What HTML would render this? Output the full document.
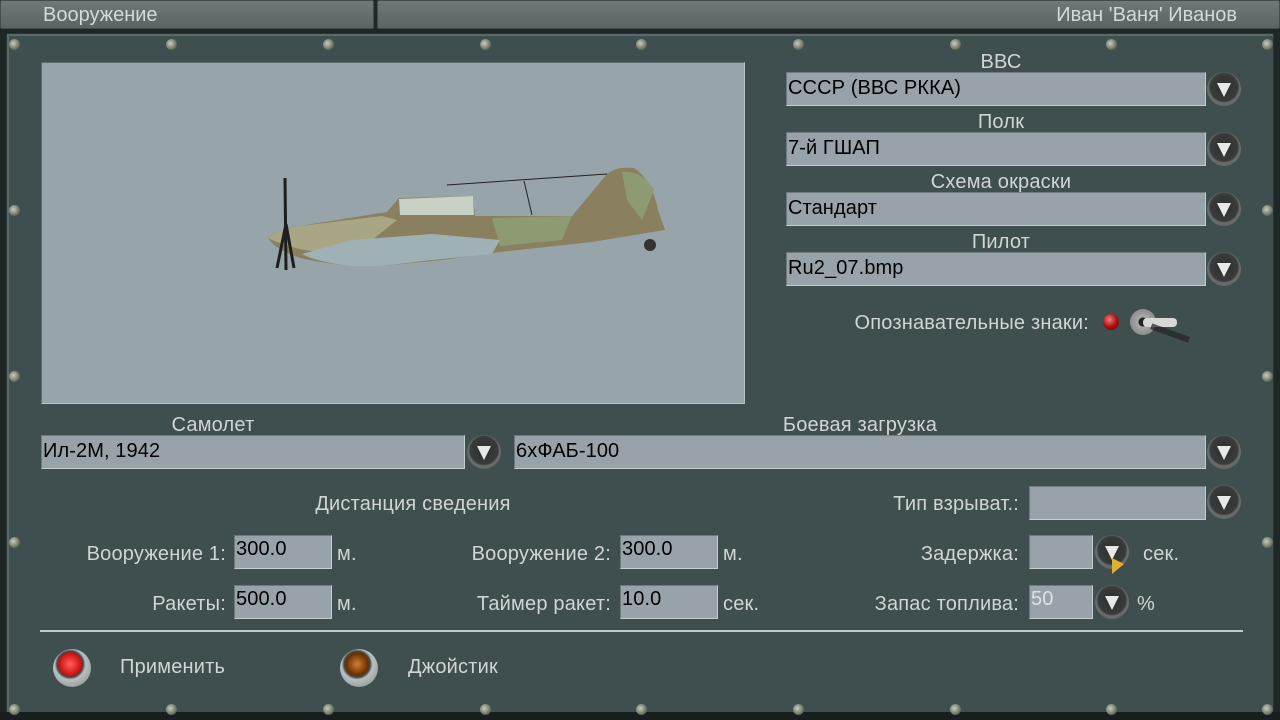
<!DOCTYPE html>
<html><head><meta charset="utf-8"><style>
*{margin:0;padding:0;box-sizing:border-box}
body{width:1280px;height:720px;overflow:hidden;background:#1f2626;font-family:"Liberation Sans",sans-serif;position:relative}
.a{position:absolute}
.top{top:0;height:29px;background:linear-gradient(#6f7876,#5b6463);border:1px solid #444c4b;border-radius:2px;color:#d4d8d8;font-size:20px;line-height:28px}
.panel{left:6px;top:33px;width:1268px;height:680px;background:#3f4e4e;border:1px solid #2a3333;box-shadow:inset 2px 2px 0 #5a6a6a}
.f{background:#97a3a8;border:1px solid #6e7a7c;border-bottom-color:#c4cccc;border-right-color:#c4cccc;color:#000;font-size:20px;line-height:31px;padding-left:1px;letter-spacing:.1px}
.l{color:#d0d5d5;font-size:20px;line-height:21px;white-space:nowrap;letter-spacing:.2px}
.c{text-align:center}
.r{text-align:right}
.b{width:34px;height:34px;border-radius:50%;background:radial-gradient(circle at 50% 45%,#2c2e2e 0,#3a3c3c 55%,#6a6e6e 62%,#4c5050 100%);}
.b:after{content:"";position:absolute;left:10px;top:11px;border-left:7px solid transparent;border-right:7px solid transparent;border-top:14px solid #e8e8e8}
.s{width:11px;height:11px;border-radius:50%;background:radial-gradient(circle at 40% 40%,#c8ccc0,#6f7666 60%,#2c302a);}
</style></head><body>
<div class="a top" style="left:0;width:374px;padding-left:42px">Вооружение</div>
<div class="a top" style="left:377px;width:903px;text-align:right;padding-right:42px">Иван 'Ваня' Иванов</div>
<div class="a panel"></div>
<div class="a" style="left:0;top:712px;width:1280px;height:8px;background:#181e1e"></div>
<div class="a s" style="left:9px;top:39px"></div><div class="a s" style="left:166px;top:39px"></div><div class="a s" style="left:323px;top:39px"></div><div class="a s" style="left:480px;top:39px"></div><div class="a s" style="left:636px;top:39px"></div><div class="a s" style="left:793px;top:39px"></div><div class="a s" style="left:950px;top:39px"></div><div class="a s" style="left:1106px;top:39px"></div><div class="a s" style="left:1262px;top:39px"></div>
<div class="a s" style="left:9px;top:205px"></div><div class="a s" style="left:9px;top:371px"></div><div class="a s" style="left:9px;top:537px"></div>
<div class="a s" style="left:1262px;top:205px"></div><div class="a s" style="left:1262px;top:371px"></div><div class="a s" style="left:1262px;top:537px"></div>
<div class="a s" style="left:9px;top:704px"></div><div class="a s" style="left:166px;top:704px"></div><div class="a s" style="left:323px;top:704px"></div><div class="a s" style="left:480px;top:704px"></div><div class="a s" style="left:636px;top:704px"></div><div class="a s" style="left:793px;top:704px"></div><div class="a s" style="left:950px;top:704px"></div><div class="a s" style="left:1106px;top:704px"></div><div class="a s" style="left:1262px;top:704px"></div>
<div class="a" style="left:41px;top:62px;width:704px;height:342px;background:#97a4a9;border:1px solid #b8c2c4;border-top-color:#5d6a6c;border-left-color:#5d6a6c"></div>
<svg class="a" style="left:262px;top:160px" width="420" height="120" viewBox="0 0 420 120">
<path d="M6 78 Q14 70 38 66 L125 52 L137 38 L211 36 L213 56 L310 56 L345 14 Q355 6 372 8 Q390 20 396 50 L403 70 L330 82 L238 92 L180 100 L120 106 L88 106 Q55 102 38 98 Q14 90 6 78Z" fill="#8a8060"/>
<path d="M6 78 Q14 70 38 66 L120 56 L135 60 L110 80 L60 92 Q30 90 6 78Z" fill="#a8a684"/>
<path d="M230 58 L310 56 L300 80 L238 86Z M360 12 Q380 10 392 30 L380 60 L365 40Z" fill="#8e9a72"/>
<path d="M40 94 L90 80 L170 74 L238 80 L230 94 L170 100 L120 106 L88 106 Q55 102 40 94Z" fill="#9fb1b5"/>
<path d="M137 39 L211 36 L212 55 L138 55Z" fill="#c9d0c6"/>
<path d="M23 18 L24 110 M24 64 L15 108 M24 64 L32 108" stroke="#1e1e1e" stroke-width="3"/>
<path d="M185 25 L345 14 M262 21 L270 55" stroke="#222" stroke-width="1"/>
<circle cx="388" cy="85" r="6" fill="#333"/>
</svg>
<div class="a l c" style="left:786px;width:430px;top:52px">ВВС</div>
<div class="a f" style="left:786px;top:72px;width:420px;height:34px">СССР (ВВС РККА)</div>
<div class="a b" style="left:1207px;top:72px"></div>
<div class="a l c" style="left:786px;width:430px;top:112px">Полк</div>
<div class="a f" style="left:786px;top:132px;width:420px;height:34px">7-й ГШАП</div>
<div class="a b" style="left:1207px;top:132px"></div>
<div class="a l c" style="left:786px;width:430px;top:172px">Схема окраски</div>
<div class="a f" style="left:786px;top:192px;width:420px;height:34px">Стандарт</div>
<div class="a b" style="left:1207px;top:192px"></div>
<div class="a l c" style="left:786px;width:430px;top:232px">Пилот</div>
<div class="a f" style="left:786px;top:252px;width:420px;height:34px">Ru2_07.bmp</div>
<div class="a b" style="left:1207px;top:252px"></div>
<div class="a l r" style="left:780px;width:309px;top:313px">Опознавательные знаки:</div>
<div class="a" style="left:1103px;top:314px;width:16px;height:16px;border-radius:50%;background:radial-gradient(circle at 40% 35%,#f08080,#b01010 50%,#500)"></div>
<div class="a" style="left:1130px;top:309px;width:26px;height:26px;border-radius:50%;background:radial-gradient(circle,#222 0 4px,#aaa 5px,#777)"></div>
<div class="a" style="left:1143px;top:318px;width:34px;height:9px;border-radius:4px;background:#d8d8d8"></div>
<div class="a" style="left:1150px;top:330px;width:40px;height:6px;background:#222;transform:rotate(20deg);opacity:.7"></div>
<div class="a l c" style="left:41px;width:344px;top:415px">Самолет</div>
<div class="a f" style="left:41px;top:435px;width:424px;height:34px">Ил-2М, 1942</div>
<div class="a b" style="left:467px;top:435px"></div>
<div class="a l c" style="left:514px;width:692px;top:415px">Боевая загрузка</div>
<div class="a f" style="left:514px;top:435px;width:692px;height:34px">6хФАБ-100</div>
<div class="a b" style="left:1207px;top:435px"></div>
<div class="a l c" style="left:250px;width:326px;top:494px">Дистанция сведения</div>
<div class="a l r" style="left:800px;width:219px;top:494px">Тип взрыват.:</div>
<div class="a f" style="left:1029px;top:486px;width:177px;height:34px"></div>
<div class="a b" style="left:1207px;top:485px"></div>
<div class="a l r" style="left:40px;width:186px;top:544px">Вооружение 1:</div>
<div class="a f" style="left:234px;top:535px;width:98px;height:34px;line-height:26px">300.0</div>
<div class="a l" style="left:337px;top:544px">м.</div>
<div class="a l r" style="left:400px;width:211px;top:544px">Вооружение 2:</div>
<div class="a f" style="left:620px;top:535px;width:98px;height:34px;line-height:26px">300.0</div>
<div class="a l" style="left:723px;top:544px">м.</div>
<div class="a l r" style="left:800px;width:219px;top:544px">Задержка:</div>
<div class="a f" style="left:1029px;top:535px;width:64px;height:34px"></div>
<div class="a b" style="left:1095px;top:535px"></div>
<div class="a l" style="left:1143px;top:544px">сек.</div>
<div class="a" style="left:1112px;top:558px;width:0;height:0;border-left:12px solid #e0b030;border-bottom:10px solid transparent;border-top:6px solid transparent"></div>
<div class="a l r" style="left:40px;width:186px;top:594px">Ракеты:</div>
<div class="a f" style="left:234px;top:585px;width:98px;height:34px;line-height:26px">500.0</div>
<div class="a l" style="left:337px;top:594px">м.</div>
<div class="a l r" style="left:400px;width:211px;top:594px">Таймер ракет:</div>
<div class="a f" style="left:620px;top:585px;width:98px;height:34px;line-height:26px">10.0</div>
<div class="a l" style="left:723px;top:594px">сек.</div>
<div class="a l r" style="left:800px;width:219px;top:594px">Запас топлива:</div>
<div class="a f" style="left:1029px;top:585px;width:64px;height:34px;line-height:26px;color:#dde2e2">50</div>
<div class="a b" style="left:1095px;top:585px"></div>
<div class="a l" style="left:1137px;top:594px">%</div>
<div class="a" style="left:40px;top:630px;width:1203px;height:2px;background:#c2caca"></div>
<div class="a" style="left:53px;top:649px;width:38px;height:38px;border-radius:50%;background:radial-gradient(circle at 45% 40%,#ff6060,#d01010 35%,#444 42%,#b8c0c0 50%,#7a8282)"></div>
<div class="a l" style="left:120px;top:657px">Применить</div>
<div class="a" style="left:340px;top:649px;width:38px;height:38px;border-radius:50%;background:radial-gradient(circle at 45% 40%,#d08030,#6a3000 35%,#444 42%,#b8c0c0 50%,#7a8282)"></div>
<div class="a l" style="left:408px;top:657px">Джойстик</div>
</body></html>
